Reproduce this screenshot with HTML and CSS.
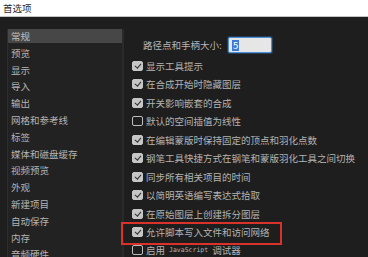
FILE: index.html
```html
<!DOCTYPE html>
<html lang="zh">
<head>
<meta charset="utf-8">
<link rel="stylesheet" href="styles.css">
</head>
<body>
<div class="titlebar">首选项</div>
<div class="window">
  <ul class="sidebar">
    <li class="nav selected">常规</li>
    <li class="nav">预览</li>
    <li class="nav">显示</li>
    <li class="nav">导入</li>
    <li class="nav">输出</li>
    <li class="nav">网格和参考线</li>
    <li class="nav">标签</li>
    <li class="nav">媒体和磁盘缓存</li>
    <li class="nav">视频预览</li>
    <li class="nav">外观</li>
    <li class="nav">新建项目</li>
    <li class="nav">自动保存</li>
    <li class="nav">内存</li>
    <li class="nav">音频硬件</li>
  </ul>
  <div class="panel">
    <div class="field">
      <span class="label">路径点和手柄大小:</span>
      <span class="input"><span class="sel">5</span></span>
    </div>
    <div class="opt"><span class="cb on"></span>显示工具提示</div>
    <div class="opt"><span class="cb on"></span>在合成开始时隐藏图层</div>
    <div class="opt"><span class="cb on"></span>开关影响嵌套的合成</div>
    <div class="opt"><span class="cb"></span>默认的空间插值为线性</div>
    <div class="opt"><span class="cb on"></span>在编辑蒙版时保持固定的顶点和羽化点数</div>
    <div class="opt"><span class="cb on"></span>钢笔工具快捷方式在钢笔和蒙版羽化工具之间切换</div>
    <div class="opt"><span class="cb on"></span>同步所有相关项目的时间</div>
    <div class="opt"><span class="cb on"></span>以简明英语编写表达式拾取</div>
    <div class="opt"><span class="cb on"></span>在原始图层上创建拆分图层</div>
    <div class="opt highlight"><span class="cb on"></span>允许脚本写入文件和访问网络<span class="redbox"></span></div>
    <div class="opt"><span class="cb"></span>启用<span class="latin">JavaScript</span>调试器</div>
  </div>
</div>
</body>
</html>
```
FILE: styles.css
```css
html, body {
  margin: 0;
  padding: 0;
  width: 368px;
  height: 257px;
  overflow: hidden;
  background: #1e1e1e;
  font-family: "Noto Sans CJK SC", "Noto Sans", sans-serif;
  font-size: 9.5px;
}

.titlebar {
  height: 16px;
  line-height: 16px;
  background: #ffffff;
  color: #2a2a2a;
  padding-left: 3px;
  border-bottom: 1px solid #c4c4c4;
}

.window {
  display: flex;
  height: 240px;
  background: #1e1e1e;
}

.sidebar {
  list-style: none;
  margin: 12px 0 0 7px;
  padding: 0;
  width: 114px;
  background: #222222;
  border-left: 1px solid #2c2c2c;
  border-right: 2px solid #2a2a2a;
  display: flex;
  flex-direction: column;
  gap: 2.8px;
}

.nav {
  height: 14px;
  line-height: 14px;
  padding-left: 3px;
  color: #b4b4b4;
  white-space: nowrap;
  flex: none;
}

.nav.selected {
  background: #474747;
  color: #c0c0c0;
}

.panel {
  flex: 1;
  padding: 20px 0 0 8px;
  display: flex;
  flex-direction: column;
}

.field {
  display: flex;
  align-items: center;
  height: 16px;
  padding-left: 11px;
  margin-bottom: 3.8px;
  color: #b6b6b6;
}

.label {
  width: 85px;
  white-space: nowrap;
}

.input {
  width: 39px;
  height: 14px;
  background: #e6e6e6;
  border: 1px solid #4b8fd4;
  border-radius: 2px;
  box-shadow: 0 0 0 1px rgba(60, 120, 200, 0.35);
  display: flex;
  align-items: center;
  padding-left: 3px;
  box-sizing: content-box;
}

.sel {
  background: #3d7ad6;
  color: #ffffff;
  line-height: 11px;
  padding: 0 1px;
}

.opt {
  position: relative;
  display: flex;
  align-items: center;
  height: 18.45px;
  color: #b4b4b4;
  white-space: nowrap;
  flex: none;
}

.cb {
  width: 11px;
  height: 10px;
  box-sizing: border-box;
  border: 1.5px solid #bdbdbd;
  border-radius: 2px;
  margin-right: 3px;
  flex: none;
  position: relative;
}

.cb.on {
  background: #c6c6c6;
  border-color: #c6c6c6;
}

.cb.on::after {
  content: "";
  position: absolute;
  left: 2.5px;
  top: 0px;
  width: 2.5px;
  height: 5px;
  border-right: 1.6px solid #2e2e2e;
  border-bottom: 1.6px solid #2e2e2e;
  transform: rotate(40deg);
}

.latin {
  font-family: "DejaVu Sans Mono", monospace;
  font-size: 6.5px;
  margin: 0 4px;
}

.redbox {
  position: absolute;
  left: -11px;
  top: -1px;
  width: 157px;
  height: 19px;
  border: 2px solid #d8322b;
}
```
